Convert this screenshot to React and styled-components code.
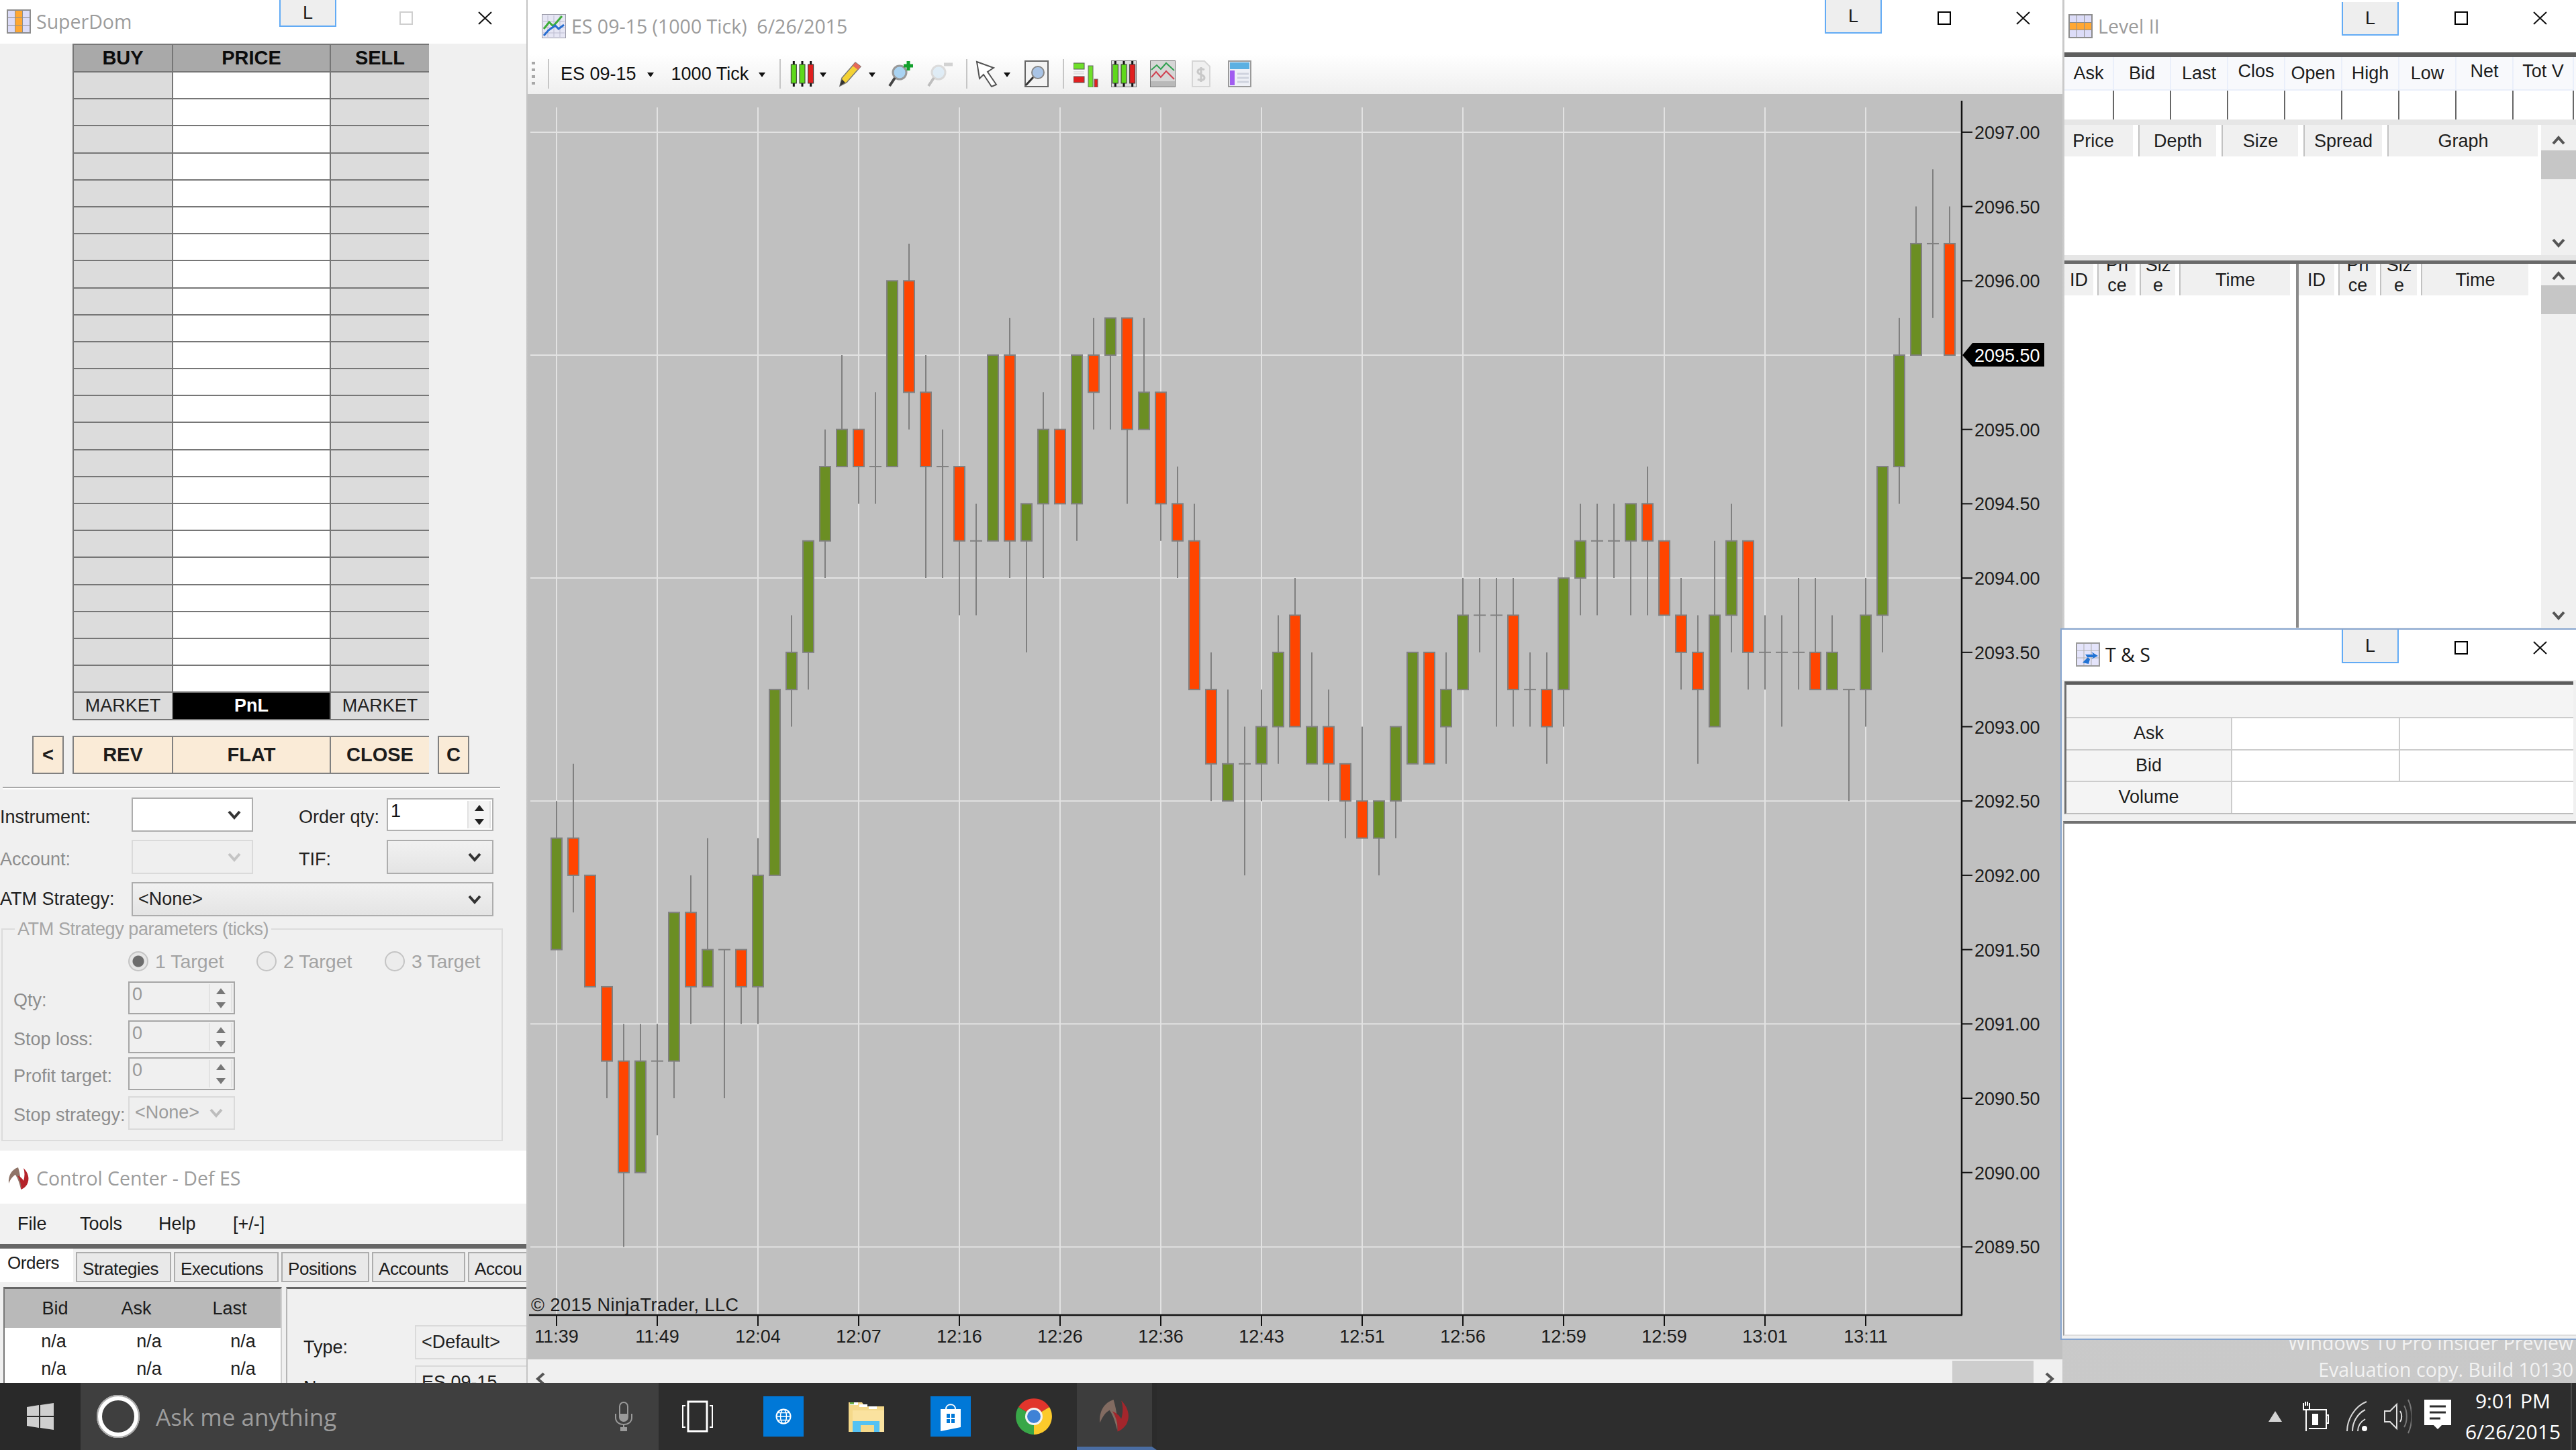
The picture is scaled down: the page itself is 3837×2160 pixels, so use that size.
import React from "react";
import styled, { createGlobalStyle } from "styled-components";

const GlobalStyle = createGlobalStyle`
  html, body {
    margin: 0;
    padding: 0;
    background: #2d2d2d;
    overflow: hidden;
  }
  * { box-sizing: border-box; }
`;

const UI_FONT = `"Liberation Sans", Arial, sans-serif`;
const SYS_FONT = `"Open Sans", "Noto Sans", sans-serif`;

/* ---------- desktop + windows ---------- */

const Screen = styled.div`
  width: 3837px;
  height: 2160px;
  display: flex;
  flex-direction: column;
  font-family: ${UI_FONT};
  font-size: 27px;
  color: #1c1c1c;
  overflow: hidden;
`;

const Desktop = styled.div`
  position: relative;
  height: 2060px;
  background: radial-gradient(circle at 80% 50%, #cdcdcd, #c1c1c1);
  overflow: hidden;
`;

const Watermark = styled.div`
  position: absolute;
  right: 4px;
  bottom: 0;
  text-align: right;
  font-family: ${SYS_FONT};
  font-size: 28.5px;
  line-height: 40px;
  color: #f2f2f2;
`;

const Window = styled.section`
  position: absolute;
  left: ${(p) => p.$x}px;
  top: ${(p) => p.$y}px;
  width: ${(p) => p.$w}px;
  height: ${(p) => p.$h}px;
  background: #f0f0f0;
  overflow: hidden;
  display: flex;
  flex-direction: column;
  ${(p) => p.$active && "border: 2px solid #86a5cf; border-right: 0;"}
`;

const TitleBar = styled.header`
  flex: none;
  height: ${(p) => p.$h}px;
  display: flex;
  align-items: flex-start;
  background: #fff;
  padding-right: ${(p) => p.$right}px;
`;

const TitleLeft = styled.div`
  display: flex;
  align-items: center;
  gap: 8px;
  padding: ${(p) => p.$top}px 0 0 ${(p) => p.$left}px;
`;

const TitleText = styled.span`
  font-family: ${SYS_FONT};
  font-size: 28.5px;
  line-height: 36px;
  color: ${(p) => (p.$active ? "#1a1a1a" : "#9c9c9c")};
  white-space: pre;
`;

const Controls = styled.div`
  margin-left: auto;
  display: flex;
  align-items: flex-start;
`;

const LockButton = styled.div`
  width: 85px;
  height: ${(p) => p.$h}px;
  margin-top: ${(p) => p.$top}px;
  background: #eeeeee;
  border: 2px solid #62abf5;
  border-top: 0;
  display: flex;
  align-items: center;
  justify-content: center;
  font-size: 27px;
`;

const MaxBox = styled.div`
  width: 20px;
  height: 20px;
  margin: 17px 0 0 ${(p) => p.$gap}px;
  border: 2px solid ${(p) => (p.$off ? "#cfcfcf" : "#000")};
`;

const CloseMark = styled.svg`
  width: 21px;
  height: 20px;
  margin: 17px 0 0 97px;
`;

function WindowControls({ lockTop = 0, lockH = 50, gap = 83, off }) {
  return (
    <Controls>
      <LockButton $top={lockTop} $h={lockH}>L</LockButton>
      <MaxBox $gap={gap} $off={off} />
      <CloseMark viewBox="0 0 21 20">
        <path d="M1 1L20 19M20 1L1 19" stroke="#111" strokeWidth="2" fill="none" />
      </CloseMark>
    </Controls>
  );
}

/* ---------- small pictures ---------- */

function GridIcon({ col, row, h = 36 }) {
  const cells = [];
  for (let r = 0; r < 3; r++) {
    for (let c = 0; c < 3; c++) {
      const on = c === col || r === row;
      cells.push(
        <rect key={`${r}${c}`} x={2 + c * 11} y={2 + r * 11} width="10" height="10" fill={on ? "#ffa733" : "#dcdcf8"} />
      );
    }
  }
  return (
    <svg width="36" height={h} viewBox="0 0 36 36" preserveAspectRatio="none">
      <rect width="36" height="36" fill="#8d8d8d" />
      {cells}
    </svg>
  );
}

function TradesIcon() {
  return (
    <svg width="36" height="36" viewBox="0 0 36 36">
      <rect width="36" height="36" fill="#9a9a9a" />
      <rect x="2" y="2" width="32" height="32" fill="#e4e4fb" />
      <path d="M2 12H34M2 23H34M12 2V34M23 2V34" stroke="#b0b0b0" />
      <path d="M14 18h12l-3-4 10 6-10 5 3-3H17zM10 30l8-8 3 3-2 7z" fill="#2273d4" />
    </svg>
  );
}

function ChartTitleIcon() {
  return (
    <svg width="36" height="36" viewBox="0 0 36 36">
      <rect width="36" height="36" fill="#e6e6f4" stroke="#9a9aa8" strokeWidth="2" />
      <path d="M9 2V34M18 2V34M27 2V34M2 11H34M2 20H34M2 28H34" stroke="#bcbcd0" />
      <path d="M3 22L11 12L17 18L30 3" stroke="#3fae3a" strokeWidth="3" fill="none" />
      <path d="M3 32L10 24L20 17L25 22L33 16" stroke="#2a6fd0" strokeWidth="3" fill="none" />
    </svg>
  );
}

function NinjaLogo({ size = 36, dim }) {
  return (
    <svg width={size} height={size} viewBox="0 0 36 36" opacity={dim ? 0.85 : 1}>
      <path d="M17 2C8 5 2 13 3 26C6 19 9 15 13 13C17 19 19 26 21 34C22 24 20 12 17 2Z" fill="#8f7468" />
      <path d="M25 3C32 10 35 19 30 28C27 32 24 34 21 35C22 28 20 21 16 14C20 16 23 18 25 22C27 15 27 9 25 3Z" fill="#b5232a" />
    </svg>
  );
}

const Chevron = styled.svg`
  width: 20px;
  height: 14px;
  display: block;
`;

function ChevronDown({ color = "#333" }) {
  return (
    <Chevron viewBox="0 0 20 14">
      <path d="M2 2L10 11L18 2" stroke={color} strokeWidth="4" fill="none" />
    </Chevron>
  );
}

function ChevronUp({ color = "#555" }) {
  return (
    <Chevron viewBox="0 0 20 14">
      <path d="M2 12L10 3L18 12" stroke={color} strokeWidth="4" fill="none" />
    </Chevron>
  );
}

/* ---------- SuperDom ---------- */

const DomGrid = styled.div`
  display: grid;
  width: 531px;
  margin-left: 108px;
  grid-template-columns: 146px 233px 146px;
  grid-template-rows: 39px repeat(23, 38.2px) 39px;
  gap: 2px;
  background: #767676;
  border: 2px solid #767676;
`;

const DomHead = styled.div`
  background: #a9a9a9;
  color: #0c0c0c;
  font-weight: 700;
  font-size: 29px;
  display: flex;
  align-items: center;
  justify-content: center;
`;

const DomCell = styled.div`
  background: ${(p) => (p.$mid ? "#fff" : "#dcdcdc")};
`;

const DomFoot = styled.div`
  background: ${(p) => (p.$dark ? "#000" : "#dcdcdc")};
  color: ${(p) => (p.$dark ? "#fff" : "#222")};
  font-weight: ${(p) => (p.$dark ? 700 : 400)};
  display: flex;
  align-items: center;
  justify-content: center;
  font-size: 27px;
`;

const ActionRow = styled.div`
  display: flex;
  gap: 13px;
  margin: 23px 0 0 48px;
`;

const ActionButton = styled.div`
  width: 47px;
  height: 57px;
  background: #faebd7;
  border: 2px solid #808080;
  font-weight: 700;
  font-size: 29px;
  display: flex;
  align-items: center;
  justify-content: center;
`;

const ActionGroup = styled.div`
  display: grid;
  width: 531px;
  height: 57px;
  grid-template-columns: 146px 233px 146px;
  gap: 2px;
  background: #808080;
  border: 2px solid #808080;
`;

const ActionCell = styled.div`
  background: #faebd7;
  font-weight: 700;
  font-size: 29px;
  display: flex;
  align-items: center;
  justify-content: center;
`;

const Rule = styled.div`
  width: 741px;
  height: 4px;
  margin: 19px 0 12px 4px;
  border-top: 2px solid #a9a9a9;
  border-bottom: 2px solid #fff;
`;

const FormRow = styled.div`
  display: flex;
  align-items: center;
  height: 51px;
  margin-bottom: 12px;
`;

const FieldLabel = styled.label`
  width: ${(p) => p.$w}px;
  margin-left: ${(p) => p.$ml || 0}px;
  padding-top: ${(p) => (p.$flat ? 0 : 8)}px;
  color: ${(p) => (p.$off ? "#8d8d8d" : "#222")};
  white-space: nowrap;
`;

const Combo = styled.div`
  width: ${(p) => p.$w}px;
  height: ${(p) => p.$h || 51}px;
  padding: 0 16px 0 8px;
  border: 2px solid ${(p) => (p.$off ? "#dadada" : "#adadad")};
  background: ${(p) =>
    p.$white
      ? "#fff"
      : p.$off
      ? "#efefef"
      : "linear-gradient(#f1f1f1, #e4e4e4)"};
  color: ${(p) => (p.$off ? "#9c9c9c" : "#222")};
  display: flex;
  align-items: center;
  justify-content: space-between;
`;

const SpinnerBox = styled.div`
  width: 159px;
  height: 49px;
  border: 2px solid ${(p) => (p.$off ? "#a6a6a6" : "#b0b0b0")};
  background: ${(p) => (p.$off ? "#f0f0f0" : "#fff")};
  color: ${(p) => (p.$off ? "#999" : "#111")};
  display: flex;
  justify-content: space-between;
  padding: 2px 2px 2px 4px;
  line-height: 30px;
`;

const SpinnerArrows = styled.div`
  width: 35px;
  display: flex;
  flex-direction: column;
  align-items: center;
  justify-content: space-around;
  border-left: 2px solid #e2e2e2;
  border-right: 2px solid #e2e2e2;
  background: ${(p) => (p.$off ? "#f0f0f0" : "#f4f4f4")};
`;

function Triangle({ up, color }) {
  return (
    <svg width="14" height="9" viewBox="0 0 14 9">
      <path d={up ? "M7 0L14 9H0Z" : "M7 9L14 0H0Z"} fill={color} />
    </svg>
  );
}

function Spinner({ value, off }) {
  const color = off ? "#777" : "#222";
  return (
    <SpinnerBox $off={off}>
      <span>{value}</span>
      <SpinnerArrows $off={off}>
        <Triangle up color={color} />
        <Triangle color={color} />
      </SpinnerArrows>
    </SpinnerBox>
  );
}

const ParamGroup = styled.fieldset`
  width: 747px;
  min-width: 0;
  height: 331px;
  margin: -8px 0 0 2px;
  padding: 0 0 0 16px;
  border: 2px solid #dcdcdc;
  color: #999;
`;

const ParamLegend = styled.legend`
  margin-left: 2px;
  padding: 0 4px;
  color: #a6a6a6;
  line-height: 30px;
  letter-spacing: -0.4px;
`;

const RadioRow = styled.div`
  display: flex;
  padding-left: 171px;
  margin: 17px 0 14px;
  height: 32px;
`;

const RadioItem = styled.div`
  flex: none;
  width: 191px;
  display: flex;
  align-items: center;
  gap: 10px;
  font-size: 28.5px;
  color: #a3a3a3;
`;

const RadioDot = styled.span`
  width: 30px;
  height: 30px;
  border-radius: 50%;
  border: 2px solid #c4c4c4;
  background: ${(p) =>
    p.$on ? "radial-gradient(circle, #6d6d6d 0 8px, #e6e6e6 9px)" : "#ececec"};
`;

const ParamRow = styled.div`
  display: flex;
  align-items: center;
  height: 49px;
  margin-bottom: ${(p) => p.$mb}px;
`;

/* ---------- chart window ---------- */

const Toolbar = styled.div`
  flex: none;
  height: 60px;
  display: flex;
  align-items: center;
  padding-left: 6px;
  background: linear-gradient(#fff, #efefef);
`;

const Grip = styled.div`
  width: 5px;
  height: 36px;
  margin-right: 19px;
  background: repeating-linear-gradient(#a8a8a8 0 4px, transparent 4px 10px);
`;

const ToolSep = styled.div`
  width: 2px;
  height: 44px;
  background: #c6c6c6;
  margin: 0 ${(p) => p.$r}px 0 ${(p) => p.$l}px;
`;

const ToolText = styled.span`
  white-space: nowrap;
  color: #111;
  font-size: 27px;
  margin-left: ${(p) => p.$l || 0}px;
`;

const ToolCaret = styled.span`
  width: 0;
  height: 0;
  margin: 2px ${(p) => p.$r || 0}px 0 ${(p) => p.$l}px;
  border-left: 5px solid transparent;
  border-right: 5px solid transparent;
  border-top: 7px solid #111;
`;

const ToolSlot = styled.svg`
  flex: none;
  width: ${(p) => p.$w}px;
  height: 40px;
  margin-left: ${(p) => p.$l || 0}px;
`;

const ChartArea = styled.svg`
  flex: none;
  display: block;
  width: 2286px;
  height: 1885px;
  background: #c0c0c0;
  text {
    font-family: ${UI_FONT};
    font-size: 27px;
    fill: #1c1c1c;
  }
  .tag {
    fill: #fff;
  }
`;

const HScroll = styled.div`
  flex: 1;
  margin-top: 2px;
  background: #f0f0f0;
  display: flex;
  justify-content: space-between;
  align-items: flex-end;
  padding: 0 12px 0 12px;
`;

const HThumbWrap = styled.div`
  display: flex;
  align-self: stretch;
  align-items: flex-end;
  gap: 17px;
`;

const HThumb = styled.div`
  width: 121px;
  align-self: stretch;
  background: #cdcdcd;
`;

const ChevronHoriz = styled.svg`
  width: 14px;
  height: 20px;
  margin-bottom: -4px;
`;

const Y_2095 = 529;
const priceY = (p) => Y_2095 + (2095.5 - p) * 221.4;
const candleX = (i) => 829 + i * 25;

const TIMES = ["11:39", "11:49", "12:04", "12:07", "12:16", "12:26", "12:36", "12:43", "12:51", "12:56", "12:59", "12:59", "13:01", "13:11"];
const GRID_PRICES = [2097, 2095.5, 2094, 2092.5, 2091, 2089.5];
const LABEL_PRICES = [2097, 2096.5, 2096, 2095, 2094.5, 2094, 2093.5, 2093, 2092.5, 2092, 2091.5, 2091, 2090.5, 2090, 2089.5];

// [kind, body top, body bottom, high, low], null when no wick
const CANDLES = [
  ["g", 2092.25, 2091.5, 2092.5, null],
  ["r", 2092.25, 2092, 2092.75, 2091.75],
  ["r", 2092, 2091.25, null, null],
  ["r", 2091.25, 2090.75, null, 2090.5],
  ["r", 2090.75, 2090, 2091, 2089.5],
  ["g", 2090.75, 2090, 2091, null],
  ["d", 2090.75, 2090.75, 2091, 2090.25],
  ["g", 2091.75, 2090.75, null, 2090.5],
  ["r", 2091.75, 2091.25, 2092, 2091],
  ["g", 2091.5, 2091.25, 2092.25, null],
  ["d", 2091.5, 2091.5, null, 2090.5],
  ["r", 2091.5, 2091.25, null, 2091],
  ["g", 2092, 2091.25, 2092.25, 2091],
  ["g", 2093.25, 2092, null, null],
  ["g", 2093.5, 2093.25, 2093.75, 2093],
  ["g", 2094.25, 2093.5, null, 2093.25],
  ["g", 2094.75, 2094.25, 2095, 2094],
  ["g", 2095, 2094.75, 2095.5, null],
  ["r", 2095, 2094.75, null, 2094.5],
  ["d", 2094.75, 2094.75, 2095.25, 2094.5],
  ["g", 2096, 2094.75, null, null],
  ["r", 2096, 2095.25, 2096.25, 2095],
  ["r", 2095.25, 2094.75, 2095.5, 2094],
  ["d", 2094.75, 2094.75, 2095, 2094],
  ["r", 2094.75, 2094.25, null, 2093.75],
  ["d", 2094.25, 2094.25, 2094.5, 2093.75],
  ["g", 2095.5, 2094.25, null, null],
  ["r", 2095.5, 2094.25, 2095.75, 2094],
  ["g", 2094.5, 2094.25, null, 2093.5],
  ["g", 2095, 2094.5, 2095.25, 2094],
  ["r", 2095, 2094.5, null, null],
  ["g", 2095.5, 2094.5, null, 2094.25],
  ["r", 2095.5, 2095.25, 2095.75, 2095],
  ["g", 2095.75, 2095.5, null, 2095],
  ["r", 2095.75, 2095, null, 2094.5],
  ["g", 2095.25, 2095, 2095.75, null],
  ["r", 2095.25, 2094.5, null, 2094.25],
  ["r", 2094.5, 2094.25, 2094.75, 2094],
  ["r", 2094.25, 2093.25, 2094.5, null],
  ["r", 2093.25, 2092.75, 2093.5, 2092.5],
  ["g", 2092.75, 2092.5, 2093.25, null],
  ["d", 2092.75, 2092.75, 2093, 2092],
  ["g", 2093, 2092.75, 2093.25, 2092.5],
  ["g", 2093.5, 2093, 2093.75, 2092.75],
  ["r", 2093.75, 2093, 2094, null],
  ["g", 2093, 2092.75, 2093.5, null],
  ["r", 2093, 2092.75, 2093.25, 2092.5],
  ["r", 2092.75, 2092.5, null, 2092.25],
  ["r", 2092.5, 2092.25, 2093, null],
  ["g", 2092.5, 2092.25, null, 2092],
  ["g", 2093, 2092.5, null, 2092.25],
  ["g", 2093.5, 2092.75, null, null],
  ["r", 2093.5, 2092.75, null, null],
  ["g", 2093.25, 2093, 2093.5, 2092.75],
  ["g", 2093.75, 2093.25, 2094, null],
  ["d", 2093.75, 2093.75, 2094, 2093.5],
  ["d", 2093.75, 2093.75, 2094, 2093],
  ["r", 2093.75, 2093.25, 2094, 2093],
  ["d", 2093.25, 2093.25, 2093.5, 2093],
  ["r", 2093.25, 2093, 2093.5, 2092.75],
  ["g", 2094, 2093.25, null, 2093],
  ["g", 2094.25, 2094, 2094.5, 2093.75],
  ["d", 2094.25, 2094.25, 2094.5, 2093.75],
  ["d", 2094.25, 2094.25, 2094.5, 2094],
  ["g", 2094.5, 2094.25, null, 2093.75],
  ["r", 2094.5, 2094.25, 2094.75, 2093.75],
  ["r", 2094.25, 2093.75, null, null],
  ["r", 2093.75, 2093.5, 2094, 2093.25],
  ["r", 2093.5, 2093.25, 2093.75, 2092.75],
  ["g", 2093.75, 2093, 2094.25, null],
  ["g", 2094.25, 2093.75, 2094.5, 2093.5],
  ["r", 2094.25, 2093.5, null, 2093.25],
  ["d", 2093.5, 2093.5, 2093.75, 2093.25],
  ["d", 2093.5, 2093.5, 2093.75, 2093],
  ["d", 2093.5, 2093.5, 2094, 2093.25],
  ["r", 2093.5, 2093.25, 2094, null],
  ["g", 2093.5, 2093.25, 2093.75, null],
  ["d", 2093.25, 2093.25, null, 2092.5],
  ["g", 2093.75, 2093.25, 2094, 2093],
  ["g", 2094.75, 2093.75, null, 2093.5],
  ["g", 2095.5, 2094.75, 2095.75, 2094.5],
  ["g", 2096.25, 2095.5, 2096.5, null],
  ["d", 2096.25, 2096.25, 2096.75, 2095.75],
  ["r", 2096.25, 2095.5, 2096.5, null],
];

function Candle({ data, index }) {
  const [kind, top, bottom, high, low] = data;
  const x = candleX(index);
  const yHigh = priceY(high ?? top);
  const yLow = priceY(low ?? bottom);
  return (
    <g>
      <line x1={x} x2={x} y1={yHigh} y2={yLow} stroke="#808080" strokeWidth="2" />
      {kind === "d" ? (
        <line x1={x - 9} x2={x + 9} y1={priceY(top)} y2={priceY(top)} stroke="#808080" strokeWidth="2" />
      ) : (
        <rect
          x={x - 8}
          y={priceY(top)}
          width="16"
          height={priceY(bottom) - priceY(top)}
          fill={kind === "g" ? "#6b8e23" : "#ff4500"}
          stroke="#808080"
          strokeWidth="2"
        />
      )}
    </g>
  );
}

function PriceChart() {
  return (
    <ChartArea viewBox="786 140 2286 1885">
      {TIMES.map((t, i) => (
        <line key={i} x1={candleX(i * 6)} x2={candleX(i * 6)} y1="160" y2="1959" stroke="#e2e2e2" strokeWidth="2" />
      ))}
      {GRID_PRICES.map((p) => (
        <line key={p} x1="790" x2="2921" y1={priceY(p)} y2={priceY(p)} stroke="#e2e2e2" strokeWidth="2" />
      ))}
      {CANDLES.map((c, i) => (
        <Candle key={i} data={c} index={i} />
      ))}
      <line x1="788" x2="2923" y1="1959" y2="1959" stroke="#111" strokeWidth="2.5" />
      <line x1="2922" x2="2922" y1="150" y2="1959" stroke="#111" strokeWidth="2.5" />
      {TIMES.map((t, i) => (
        <g key={i}>
          <line x1={candleX(i * 6)} x2={candleX(i * 6)} y1="1959" y2="1975" stroke="#111" strokeWidth="2" />
          <text x={candleX(i * 6)} y="2000" textAnchor="middle">{t}</text>
        </g>
      ))}
      {LABEL_PRICES.map((p) => (
        <g key={p}>
          <line x1="2922" x2="2938" y1={priceY(p)} y2={priceY(p)} stroke="#111" strokeWidth="2" />
          <text x="2941" y={priceY(p) + 10}>{p.toFixed(2)}</text>
        </g>
      ))}
      <polygon points="2923,529 2938,511 3045,511 3045,546 2938,546" fill="#000" />
      <text className="tag" x="2941" y="539">2095.50</text>
      <text x="791" y="1953" letterSpacing="0.5">© 2015 NinjaTrader, LLC</text>
    </ChartArea>
  );
}

/* ---------- toolbar icons ---------- */

function ToolCandles({ colors = ["#5fd81c", "#5fd81c", "#e02020"], w = 38, boxed }) {
  return (
    <ToolSlot $w={w} viewBox={`0 0 ${w} 40`} $l={boxed ? boxed : 0}>
      {boxed && <rect x="0" y="0" width={w} height="40" fill="#dcdcdc" stroke="#777" strokeWidth="2" />}
      {colors.map((c, i) => {
        const x = (w / 3) * i + w / 6;
        return (
          <g key={i}>
            <line x1={x} x2={x} y1="1" y2="39" stroke="#111" strokeWidth="3" />
            <rect x={x - 4} y="6" width="8" height="28" fill={c} stroke="#333" />
          </g>
        );
      })}
    </ToolSlot>
  );
}

function ToolPencil() {
  return (
    <ToolSlot $w={36} viewBox="0 0 36 40" $l={18}>
      <path d="M2 38L5 26L25 3L33 9L12 33Z" fill="#f4d234" stroke="#777" strokeWidth="1.5" />
      <path d="M25 3L33 9L29 14L21 8Z" fill="#e66a5a" />
      <path d="M2 38L5 28L10 33Z" fill="#333" />
    </ToolSlot>
  );
}

function ToolZoom({ l, dim, plus, minus }) {
  return (
    <ToolSlot $w={40} viewBox="0 0 40 40" $l={l} opacity={dim ? 0.3 : 1}>
      <circle cx="17" cy="18" r="10" fill="#a9d3f2" stroke="#999" strokeWidth="3" />
      <path d="M10 26L2 38" stroke="#444" strokeWidth="4" />
      {plus && <path d="M30 1V15M23 8H37" stroke="#12a02c" strokeWidth="5" />}
      {minus && <path d="M25 6H38" stroke="#777" strokeWidth="5" />}
    </ToolSlot>
  );
}

function ToolCursor() {
  return (
    <ToolSlot $w={35} viewBox="0 0 35 40">
      <path d="M2 2L27 11L18 17L31 36L24 39L12 21L6 27Z" fill="#fff" stroke="#555" strokeWidth="2" />
    </ToolSlot>
  );
}

function ToolFind() {
  return (
    <ToolSlot $w={36} viewBox="0 0 36 40" $l={21}>
      <rect x="1" y="1" width="34" height="38" fill="#f3f3f3" stroke="#666" strokeWidth="2" />
      <circle cx="20" cy="18" r="9" fill="#a9c4e6" stroke="#888" strokeWidth="2" />
      <path d="M13 25L2 37" stroke="#333" strokeWidth="3" />
    </ToolSlot>
  );
}

function ToolDepth() {
  return (
    <ToolSlot $w={37} viewBox="0 0 37 40" $l={14}>
      <rect x="0" y="4" width="16" height="9" fill="#6fe02a" stroke="#555" />
      <rect x="0" y="24" width="16" height="9" fill="#e02020" stroke="#555" />
      <path d="M0 17H16M0 20H16" stroke="#ccc" />
      <rect x="22" y="8" width="7" height="32" fill="#6fe02a" stroke="#666" />
      <rect x="31" y="28" width="5" height="12" fill="#e02020" stroke="#666" />
    </ToolSlot>
  );
}

function ToolIndicators() {
  return (
    <ToolSlot $w={38} viewBox="0 0 38 40" $l={20}>
      <rect width="38" height="40" fill="#b9b9b9" stroke="#777" strokeWidth="2" />
      <rect x="1" y="1" width="36" height="30" fill="#d6d6d6" />
      <path d="M2 14L10 7L16 13L24 4L36 15" fill="none" stroke="#30a050" strokeWidth="2" />
      <path d="M2 25L9 17L16 25L24 16L36 28" fill="none" stroke="#d04050" strokeWidth="2" />
    </ToolSlot>
  );
}

function ToolDollar() {
  return (
    <ToolSlot $w={30} viewBox="0 0 30 40" $l={23}>
      <path d="M2 1H20L28 9V39H2Z" fill="#f0f0f0" stroke="#d6d6d6" strokeWidth="2" />
      <path d="M20 14C17 12 10 12 10 17C10 22 20 20 20 26C20 30 13 30 10 28M15 10V32" fill="none" stroke="#c8c8c8" strokeWidth="3" />
    </ToolSlot>
  );
}

function ToolCalc() {
  return (
    <ToolSlot $w={35} viewBox="0 0 35 40" $l={25}>
      <rect x="1" y="1" width="33" height="38" fill="#eef0f6" stroke="#9a9a9a" strokeWidth="2" />
      <rect x="3" y="3" width="29" height="10" fill="#5bb0e2" />
      <rect x="3" y="15" width="7" height="22" fill="#a15cf0" />
      <path d="M14 20H31M14 26H31M14 32H31" stroke="#cfd3de" strokeWidth="3" />
    </ToolSlot>
  );
}

/* ---------- Level II ---------- */

const QuoteHead = styled.div`
  display: grid;
  grid-template-columns: 74px repeat(7, 85px) 90px;
  height: 50px;
  border-top: 7px solid #5e5e5e;
  background: #f8f9fc;
  box-sizing: content-box;
`;

const QuoteHeadCell = styled.div`
  border-right: 2px solid #eaeffa;
  border-bottom: 2px solid #eaeffa;
  display: flex;
  align-items: center;
  justify-content: center;
  padding-bottom: ${(p) => (p.$up ? 6 : 0)}px;
`;

const QuoteValues = styled.div`
  display: grid;
  grid-template-columns: 74px repeat(7, 85px) 90px;
  height: 43px;
  background: #fff;
`;

const QuoteValueCell = styled.div`
  border-right: 2px solid #676767;
`;

const Strip = styled.div`
  flex: none;
  height: ${(p) => p.$h}px;
  background: #e6e6e6;
  border-bottom: ${(p) => p.$dark || 0}px solid #6a6a6a;
`;

const SplitRow = styled.div`
  flex: none;
  height: ${(p) => p.$h}px;
  display: flex;
  background: #fff;
`;

const ColumnHeads = styled.div`
  display: grid;
  grid-template-columns: ${(p) => p.$cols};
  column-gap: ${(p) => p.$gap}px;
  height: 47px;
  width: ${(p) => p.$w}px;
`;

const ColumnHead = styled.div`
  background: #f0f0f0;
  border-left: ${(p) => (p.$first ? 0 : 2)}px solid #c2c2c2;
  display: flex;
  align-items: ${(p) => (p.$clip ? "flex-end" : "center")};
  justify-content: center;
  text-align: center;
  line-height: 30px;
  overflow: hidden;
  padding-right: ${(p) => p.$pr || 0}px;
`;

const Wrapped = styled.span`
  width: 40px;
  word-break: break-all;
`;

const VScroll = styled.div`
  width: 52px;
  margin-left: auto;
  background: #f0f0f0;
  display: flex;
  flex-direction: column;
  align-items: center;
  padding-top: ${(p) => p.$pad}px;
  padding-bottom: 11px;
`;

const VThumb = styled.div`
  align-self: stretch;
  height: 43px;
  margin-top: ${(p) => p.$mt}px;
  background: #c6c6c6;
`;

const ScrollEnd = styled.div`
  margin-top: auto;
`;

const TapeSide = styled.div`
  width: ${(p) => p.$w}px;
  border-right: ${(p) => (p.$divider ? "4px solid #8a8a8a" : 0)};
`;

/* ---------- T & S ---------- */

const InfoBox = styled.div`
  margin: 2px 4px 0 4px;
  border-top: 5px solid #5c5c5c;
  border-left: 3px solid #6e6e6e;
  border-bottom: 2px solid #bdbdbd;
  display: grid;
  grid-template-columns: 245px 248px 1fr;
  grid-template-rows: 48px repeat(3, 45.5px);
  gap: 2px;
  background: #cccccc;
`;

const InfoBanner = styled.div`
  grid-column: 1 / -1;
  background: #f4f4f4;
`;

const InfoLabel = styled.div`
  background: #f4f4f4;
  display: flex;
  align-items: center;
  justify-content: center;
`;

const InfoValue = styled.div`
  background: #fff;
  grid-column: ${(p) => (p.$wide ? "2 / -1" : "auto")};
`;

const TapeArea = styled.div`
  flex: 1;
  margin: 10px 0 4px 2px;
  background: #fff;
  border-top: 4px solid #717171;
  border-left: 2px solid #9a9a9a;
  border-bottom: 2px solid #ddd;
`;

/* ---------- Control Center ---------- */

const MenuBar = styled.nav`
  flex: none;
  height: 60px;
  display: flex;
  align-items: center;
  padding-left: 26px;
  background: #f1f1f1;
`;

const MenuItem = styled.span`
  width: ${(p) => p.$w}px;
`;

const TabStrip = styled.div`
  flex: none;
  height: 57px;
  border-top: 7px solid #666;
  display: flex;
  gap: 4px;
  background: #f0f0f0;
  overflow: hidden;
  align-items: flex-start;
`;

const Tab = styled.div`
  flex: none;
  width: ${(p) => p.$w}px;
  height: ${(p) => (p.$on ? 50 : 45)}px;
  margin-top: ${(p) => (p.$on ? 0 : 5)}px;
  padding: ${(p) => (p.$on ? "6px 0 0 11px" : "8px 0 0 8px")};
  background: ${(p) => (p.$on ? "#fff" : "#e9e9e9")};
  border: ${(p) => (p.$on ? 0 : "2px solid #adadad")};
  border-bottom: ${(p) => (p.$on ? 0 : "2px solid #adadad")};
  font-size: 26px;
  letter-spacing: -0.4px;
`;

const OrdersBody = styled.div`
  flex: 1;
  display: flex;
  gap: 6px;
  padding: 7px 0 0 5px;
  min-height: 0;
`;

const MiniGrid = styled.div`
  flex: none;
  width: 415px;
  height: 145px;
  border-top: 3px solid #666;
  border-left: 2px solid #777;
  border-right: 2px solid #cfcfcf;
  border-bottom: 2px solid #bbb;
  background: #fff;
  overflow: hidden;
`;

const MiniRow = styled.div`
  display: grid;
  grid-template-columns: ${(p) => p.$cols};
  height: ${(p) => p.$h}px;
  align-items: center;
  justify-items: center;
  background: ${(p) => p.$bg};
`;

const EntryPanel = styled.div`
  flex: 1;
  border-top: 3px solid #666;
  border-left: 2px solid #b5b5b5;
  padding: 54px 0 0 24px;
`;

const EntryRow = styled.div`
  display: flex;
  align-items: flex-start;
  margin-bottom: 9px;
`;

const EntryLabel = styled.span`
  width: 166px;
  padding-top: 18px;
`;

const EntryCombo = styled(Combo)`
  color: #222;
`;

/* ---------- taskbar ---------- */

const Taskbar = styled.footer`
  flex: none;
  height: 100px;
  display: flex;
  align-items: center;
  background: #2d2d2d;
  color: #fff;
  font-family: ${SYS_FONT};
`;

const StartCell = styled.div`
  width: 120px;
  align-self: stretch;
  display: flex;
  align-items: center;
  padding-left: 40px;
  background: #292929;
`;

const SearchBox = styled.div`
  width: 861px;
  align-self: stretch;
  display: flex;
  align-items: center;
  padding: 0 38px 0 24px;
  background: #3f3f3f;
`;

const CortanaRing = styled.div`
  width: 64px;
  height: 64px;
  border-radius: 50%;
  border: 8px solid #fff;
  outline: 2px solid #a8a8a8;
  outline-offset: -2px;
`;

const SearchText = styled.span`
  margin: 0 auto 0 24px;
  font-size: 35px;
  color: #9c9c9c;
`;

const TaskSlot = styled.div`
  flex: none;
  display: flex;
  align-items: center;
  justify-content: center;
  margin-left: ${(p) => p.$l}px;
`;

const TaskTile = styled(TaskSlot)`
  width: 60px;
  height: 60px;
  background: #0078d7;
`;

const ActiveTask = styled(TaskSlot)`
  width: 119px;
  align-self: stretch;
  background: #3d3d3d;
  border-bottom: 5px solid #4a6da3;
  border-right: 7px solid #2b2b2b;
`;

const Tray = styled.div`
  margin-left: auto;
  display: flex;
  align-items: center;
  height: 100%;
  padding-right: 6px;
`;

const Clock = styled.div`
  width: 172px;
  margin-left: 6px;
  text-align: center;
  font-size: 30px;
  line-height: 46px;
`;

const ClockDivider = styled.div`
  width: 2px;
  align-self: stretch;
  background: #4a4a4a;
`;

const TrayIcon = styled.svg`
  flex: none;
  margin-left: ${(p) => p.$l}px;
`;

/* ---------- data ---------- */

const TABS = [
  ["Orders", 109],
  ["Strategies", 142],
  ["Executions", 156],
  ["Positions", 131],
  ["Accounts", 139],
  ["Accou", 120],
];

const QUOTES = ["Ask", "Bid", "Last", "Clos", "Open", "High", "Low", "Net", "Tot V"];

function TapeHeads({ cols, w }) {
  return (
    <ColumnHeads $cols={cols} $gap={6} $w={w}>
      <ColumnHead $first>ID</ColumnHead>
      <ColumnHead $clip><Wrapped>Price</Wrapped></ColumnHead>
      <ColumnHead $clip><Wrapped>Size</Wrapped></ColumnHead>
      <ColumnHead>Time</ColumnHead>
    </ColumnHeads>
  );
}

/* ---------- windows ---------- */

function SuperDom() {
  const rows = Array.from({ length: 23 });
  return (
    <Window $x={0} $y={0} $w={784} $h={1714}>
      <TitleBar $h={65} $right={51}>
        <TitleLeft $top={14} $left={10}>
          <GridIcon col={1} />
          <TitleText>SuperDom</TitleText>
        </TitleLeft>
        <WindowControls lockH={40} gap={94} off />
      </TitleBar>

      <DomGrid>
        <DomHead>BUY</DomHead>
        <DomHead>PRICE</DomHead>
        <DomHead>SELL</DomHead>
        {rows.map((_, i) => (
          <React.Fragment key={i}>
            <DomCell />
            <DomCell $mid />
            <DomCell />
          </React.Fragment>
        ))}
        <DomFoot>MARKET</DomFoot>
        <DomFoot $dark>PnL</DomFoot>
        <DomFoot>MARKET</DomFoot>
      </DomGrid>

      <ActionRow>
        <ActionButton>&lt;</ActionButton>
        <ActionGroup>
          <ActionCell>REV</ActionCell>
          <ActionCell>FLAT</ActionCell>
          <ActionCell>CLOSE</ActionCell>
        </ActionGroup>
        <ActionButton>C</ActionButton>
      </ActionRow>

      <Rule />

      <FormRow>
        <FieldLabel $w={196}>Instrument:</FieldLabel>
        <Combo $w={181} $white>
          <span />
          <ChevronDown />
        </Combo>
        <FieldLabel $w={131} $ml={68}>Order qty:</FieldLabel>
        <Spinner value="1" />
      </FormRow>
      <FormRow>
        <FieldLabel $w={196} $off>Account:</FieldLabel>
        <Combo $w={181} $off>
          <span />
          <ChevronDown color="#c4c4c4" />
        </Combo>
        <FieldLabel $w={131} $ml={68}>TIF:</FieldLabel>
        <Combo $w={159}>
          <span />
          <ChevronDown />
        </Combo>
      </FormRow>
      <FormRow>
        <FieldLabel $w={196} $flat>ATM Strategy:</FieldLabel>
        <Combo $w={539}>
          <span>&lt;None&gt;</span>
          <ChevronDown />
        </Combo>
      </FormRow>

      <ParamGroup>
        <ParamLegend>ATM Strategy parameters (ticks)</ParamLegend>
        <RadioRow>
          <RadioItem><RadioDot $on />1 Target</RadioItem>
          <RadioItem><RadioDot />2 Target</RadioItem>
          <RadioItem><RadioDot />3 Target</RadioItem>
        </RadioRow>
        <ParamRow $mb={9}>
          <FieldLabel $w={171} $off>Qty:</FieldLabel>
          <Spinner value="0" off />
        </ParamRow>
        <ParamRow $mb={6}>
          <FieldLabel $w={171} $off>Stop loss:</FieldLabel>
          <Spinner value="0" off />
        </ParamRow>
        <ParamRow $mb={9}>
          <FieldLabel $w={171} $off>Profit target:</FieldLabel>
          <Spinner value="0" off />
        </ParamRow>
        <ParamRow $mb={0}>
          <FieldLabel $w={171} $off>Stop strategy:</FieldLabel>
          <Combo $w={159} $h={50} $off>
            <span>&lt;None&gt;</span>
            <ChevronDown color="#bdbdbd" />
          </Combo>
        </ParamRow>
      </ParamGroup>
    </Window>
  );
}

function ChartWindow() {
  return (
    <Window $x={786} $y={0} $w={2286} $h={2060}>
      <TitleBar $h={80} $right={48}>
        <TitleLeft $top={21} $left={21}>
          <ChartTitleIcon />
          <TitleText>{"ES 09-15 (1000 Tick)  6/26/2015"}</TitleText>
        </TitleLeft>
        <WindowControls />
      </TitleBar>
      <Toolbar>
        <Grip />
        <ToolSep $l={0} $r={17} />
        <ToolText>ES 09-15</ToolText>
        <ToolCaret $l={16} />
        <ToolText $l={26}>1000 Tick</ToolText>
        <ToolCaret $l={15} />
        <ToolSep $l={21} $r={13} />
        <ToolCandles />
        <ToolCaret $l={7} />
        <ToolPencil />
        <ToolCaret $l={9} />
        <ToolZoom l={19} plus />
        <ToolZoom l={18} dim minus />
        <ToolSep $l={18} $r={12} />
        <ToolCursor />
        <ToolCaret $l={7} />
        <ToolFind />
        <ToolSep $l={21} $r={0} />
        <ToolDepth />
        <ToolCandles boxed={19} colors={["#5fd81c", "#5fd81c", "#e02020"]} />
        <ToolIndicators />
        <ToolDollar />
        <ToolCalc />
      </Toolbar>
      <PriceChart />
      <HScroll>
        <ChevronHoriz viewBox="0 0 14 20">
          <path d="M12 2L3 10L12 18" stroke="#555" strokeWidth="4" fill="none" />
        </ChevronHoriz>
        <HThumbWrap>
          <HThumb />
          <ChevronHoriz viewBox="0 0 14 20">
            <path d="M2 2L11 10L2 18" stroke="#555" strokeWidth="4" fill="none" />
          </ChevronHoriz>
        </HThumbWrap>
      </HScroll>
    </Window>
  );
}

function LevelTwo() {
  return (
    <Window $x={3075} $y={0} $w={762} $h={940}>
      <TitleBar $h={78} $right={43}>
        <TitleLeft $top={21} $left={6}>
          <GridIcon row={1} />
          <TitleText>Level II</TitleText>
        </TitleLeft>
        <WindowControls lockTop={3} />
      </TitleBar>
      <QuoteHead>
        {QUOTES.map((q) => (
          <QuoteHeadCell key={q} $up={q === "Clos" || q === "Net" || q === "Tot V"}>{q}</QuoteHeadCell>
        ))}
      </QuoteHead>
      <QuoteValues>
        {QUOTES.map((q) => (
          <QuoteValueCell key={q} />
        ))}
      </QuoteValues>
      <Strip $h={8} />
      <SplitRow $h={194}>
        <ColumnHeads $cols="102px 116px 114px 117px 224px" $gap={8} $w={705}>
          <ColumnHead $first $pr={16}>Price</ColumnHead>
          <ColumnHead>Depth</ColumnHead>
          <ColumnHead>Size</ColumnHead>
          <ColumnHead>Spread</ColumnHead>
          <ColumnHead>Graph</ColumnHead>
        </ColumnHeads>
        <VScroll $pad={16}>
          <ChevronUp />
          <VThumb $mt={8} />
          <ScrollEnd><ChevronDown color="#555" /></ScrollEnd>
        </VScroll>
      </SplitRow>
      <Strip $h={13} $dark={5} />
      <SplitRow $h={542}>
        <TapeSide $w={349} $divider>
          <TapeHeads cols="43px 57px 53px 165px" w={345} />
        </TapeSide>
        <TapeSide $w={356}>
          <TapeHeads cols="53px 56px 55px 160px" w={356} />
        </TapeSide>
        <VScroll $pad={11}>
          <ChevronUp />
          <VThumb $mt={7} />
          <ScrollEnd><ChevronDown color="#555" /></ScrollEnd>
        </VScroll>
      </SplitRow>
    </Window>
  );
}

function TimeAndSales() {
  return (
    <Window $x={3069} $y={936} $w={768} $h={1060} $active>
      <TitleBar $h={75} $right={43}>
        <TitleLeft $top={19} $left={21}>
          <TradesIcon />
          <TitleText $active>T &amp; S</TitleText>
        </TitleLeft>
        <WindowControls lockTop={0} />
      </TitleBar>
      <InfoBox>
        <InfoBanner />
        <InfoLabel>Ask</InfoLabel>
        <InfoValue />
        <InfoValue />
        <InfoLabel>Bid</InfoLabel>
        <InfoValue />
        <InfoValue />
        <InfoLabel>Volume</InfoLabel>
        <InfoValue $wide />
      </InfoBox>
      <TapeArea />
    </Window>
  );
}

function ControlCenter() {
  return (
    <Window $x={0} $y={1714} $w={784} $h={346}>
      <TitleBar $h={79} $right={0}>
        <TitleLeft $top={23} $left={10}>
          <NinjaLogo />
          <TitleText>Control Center - Def ES</TitleText>
        </TitleLeft>
      </TitleBar>
      <MenuBar>
        <MenuItem $w={93}>File</MenuItem>
        <MenuItem $w={117}>Tools</MenuItem>
        <MenuItem $w={111}>Help</MenuItem>
        <MenuItem $w={70}>[+/-]</MenuItem>
      </MenuBar>
      <TabStrip>
        {TABS.map(([name, w], i) => (
          <Tab key={name} $w={w} $on={i === 0}>{name}</Tab>
        ))}
      </TabStrip>
      <OrdersBody>
        <MiniGrid>
          <MiniRow $cols="150px 92px 186px" $h={58} $bg="#b9b9b9">
            <span>Bid</span>
            <span>Ask</span>
            <span>Last</span>
          </MiniRow>
          <MiniRow $cols="146px 138px 142px" $h={41} $bg="#fff">
            <span>n/a</span>
            <span>n/a</span>
            <span>n/a</span>
          </MiniRow>
          <MiniRow $cols="146px 138px 142px" $h={41} $bg="#fff">
            <span>n/a</span>
            <span>n/a</span>
            <span>n/a</span>
          </MiniRow>
        </MiniGrid>
        <EntryPanel>
          <EntryRow>
            <EntryLabel>Type:</EntryLabel>
            <EntryCombo $w={170} $h={51} $off>&lt;Default&gt;</EntryCombo>
          </EntryRow>
          <EntryRow>
            <EntryLabel>Name:</EntryLabel>
            <EntryCombo $w={170} $h={51} $off>ES 09-15</EntryCombo>
          </EntryRow>
        </EntryPanel>
      </OrdersBody>
    </Window>
  );
}

/* ---------- taskbar icons ---------- */

function WindowsLogo() {
  return (
    <svg width="40" height="40" viewBox="0 0 40 40">
      <path d="M0 6L18 3V19H0ZM20 3L40 0V19H20ZM0 21H18V37L0 34ZM20 21H40V40L20 37Z" fill="#cfcfcf" />
    </svg>
  );
}

function MicIcon() {
  return (
    <svg width="28" height="44" viewBox="0 0 28 44">
      <rect x="8" y="1" width="12" height="28" rx="6" fill="none" stroke="#9a9a9a" strokeWidth="2" />
      <rect x="9" y="18" width="10" height="10" fill="#9a9a9a" />
      <path d="M2 18V24C2 30 7 34 14 34C21 34 26 30 26 24V18M14 34V40" fill="none" stroke="#9a9a9a" strokeWidth="2" />
      <rect x="9" y="38" width="10" height="6" fill="#9a9a9a" />
    </svg>
  );
}

function TaskViewIcon() {
  return (
    <svg width="46" height="48" viewBox="0 0 46 48">
      <rect x="9" y="2" width="28" height="44" fill="none" stroke="#fff" strokeWidth="3" />
      <path d="M5 8H1V40H5M41 8H45V40H41" fill="none" stroke="#fff" strokeWidth="2" />
    </svg>
  );
}

function GlobeIcon() {
  return (
    <svg width="24" height="24" viewBox="0 0 24 24">
      <circle cx="12" cy="12" r="10.5" fill="none" stroke="#fff" strokeWidth="2" />
      <ellipse cx="12" cy="12" rx="4.5" ry="10.5" fill="none" stroke="#fff" strokeWidth="1.5" />
      <path d="M2 12H22M4 6.5H20M4 17.5H20" stroke="#fff" strokeWidth="1.5" />
    </svg>
  );
}

function FolderIcon() {
  return (
    <svg width="53" height="46" viewBox="0 0 53 46">
      <path d="M0 2H20L24 8H53V46H0Z" fill="#f5d98a" />
      <path d="M2 2H14V6H2ZM16 5H28V9H16ZM30 8H42V12H30Z" fill="#fff" />
      <path d="M2 2H8V5H2Z" fill="#6fb34a" />
      <path d="M6 14H53V46H6Z" fill="#fae29f" />
      <path d="M6 30H46V46H38V36H18V46H6Z" fill="#55c2f3" />
      <rect x="18" y="36" width="20" height="10" fill="#f5d98a" />
    </svg>
  );
}

function StoreBag() {
  return (
    <svg width="32" height="44" viewBox="0 0 32 44">
      <path d="M9 11C9 2 23 2 23 11" fill="none" stroke="#fff" strokeWidth="2" />
      <path d="M1 11H31V38L1 44Z" fill="#fff" />
      <path d="M10 18H15V24H10ZM17 18H22V24H17ZM10 26H15V32H10ZM17 26H22V32H17Z" fill="#0078d7" />
    </svg>
  );
}

function ChromeIcon() {
  return (
    <svg width="54" height="54" viewBox="0 0 54 54">
      <path d="M27 27L4 13A27 27 0 0 1 50 13Z" fill="#e1352c" />
      <path d="M27 27L50 13A27 27 0 0 1 27 54Z" fill="#fcca2b" />
      <path d="M27 27L27 54A27 27 0 0 1 4 13Z" fill="#39a748" />
      <circle cx="27" cy="27" r="13" fill="#f3f3f3" />
      <circle cx="27" cy="27" r="10" fill="#3f82d6" />
    </svg>
  );
}

function TaskbarTray() {
  return (
    <Tray>
      <TrayIcon $l={0} width="20" height="16" viewBox="0 0 20 16">
        <path d="M10 0L20 16H0Z" fill="#d4d4d4" />
      </TrayIcon>
      <TrayIcon $l={30} width="40" height="44" viewBox="0 0 40 44">
        <path d="M2 2V12H11V2M5 0V6M8 0V6M6 12V44" fill="none" stroke="#fff" strokeWidth="2" />
        <path d="M12 12H36V40H10M36 20H39V32H36" fill="none" stroke="#fff" strokeWidth="2" />
        <rect x="15" y="18" width="9" height="17" fill="#fff" />
      </TrayIcon>
      <TrayIcon $l={26} width="32" height="46" viewBox="0 0 32 46">
        <path d="M1 45C1 28 12 8 30 1M9 45C9 32 16 19 28 13M17 45C17 38 21 31 28 27" fill="none" stroke="#d8d8d8" strokeWidth="2" />
        <circle cx="27" cy="41" r="4" fill="#fff" />
      </TrayIcon>
      <TrayIcon $l={23} width="42" height="52" viewBox="0 0 42 52">
        <path d="M2 18H10L20 8V44L10 34H2Z" fill="none" stroke="#e0e0e0" strokeWidth="2" />
        <path d="M25 18C28 22 28 30 25 34" fill="none" stroke="#e0e0e0" strokeWidth="2" />
        <path d="M31 10C36 18 36 34 31 42M37 1C44 16 44 36 37 51" fill="none" stroke="#777" strokeWidth="2" />
      </TrayIcon>
      <TrayIcon $l={19} width="40" height="50" viewBox="0 0 40 50">
        <path d="M0 0H40V38H26L20 44L14 38H0Z" fill="#fff" />
        <path d="M8 10H32M8 19H32M8 28H24" stroke="#2d2d2d" strokeWidth="3" />
      </TrayIcon>
      <Clock>
        <div>9:01 PM</div>
        <div>6/26/2015</div>
      </Clock>
      <ClockDivider />
    </Tray>
  );
}

export default function App() {
  return (
    <Screen>
      <GlobalStyle />
      <Desktop>
        <Watermark>
          <div>Windows 10 Pro Insider Preview</div>
          <div>Evaluation copy. Build 10130</div>
        </Watermark>
        <LevelTwo />
        <ChartWindow />
        <TimeAndSales />
        <SuperDom />
        <ControlCenter />
      </Desktop>
      <Taskbar>
        <StartCell><WindowsLogo /></StartCell>
        <SearchBox>
          <CortanaRing />
          <SearchText>Ask me anything</SearchText>
          <MicIcon />
        </SearchBox>
        <TaskSlot $l={35}><TaskViewIcon /></TaskSlot>
        <TaskTile $l={75}><GlobeIcon /></TaskTile>
        <TaskSlot $l={67}><FolderIcon /></TaskSlot>
        <TaskTile $l={69}><StoreBag /></TaskTile>
        <TaskSlot $l={67}><ChromeIcon /></TaskSlot>
        <ActiveTask $l={37}><NinjaLogo size={52} dim /></ActiveTask>
        <TaskbarTray />
      </Taskbar>
    </Screen>
  );
}
